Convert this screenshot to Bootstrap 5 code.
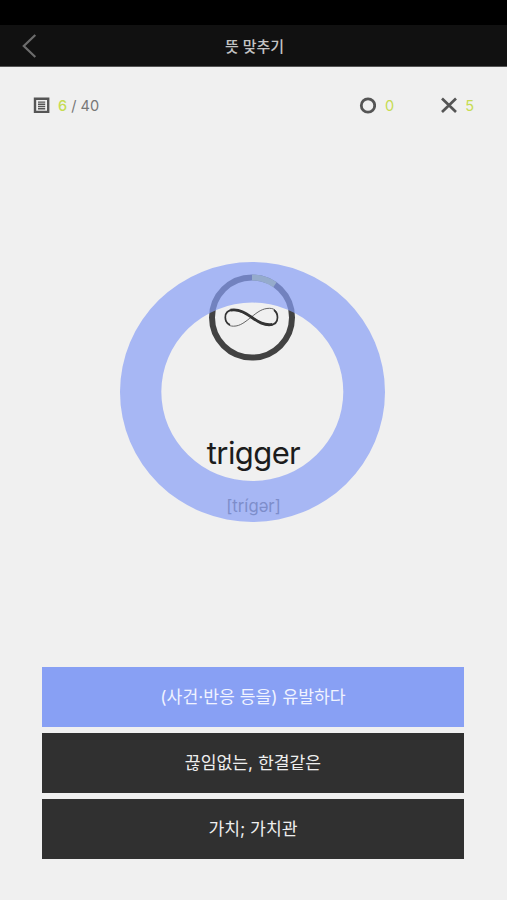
<!DOCTYPE html>
<html lang="ko">
<head>
<meta charset="utf-8">
<meta name="viewport" content="width=device-width, initial-scale=1">
<title>뜻 맞추기</title>
<link href="https://cdn.jsdelivr.net/npm/bootstrap@5.3.0/dist/css/bootstrap.min.css" rel="stylesheet">
<style>
  body { background: #f0f0f0; font-family: Inter, "Noto Sans CJK KR", sans-serif; color: #777; }
  svg { display: block; flex: none; }
  .status-strip { height: 25px; background: #000; }
  .title-bar { height: 42px; background: #111; border-bottom: 1px solid #555; display: grid; grid-template-columns: 60px 1fr 60px; }
  .title-bar h1 { font-size: 15px; font-weight: 500; color: #c4c4c4; line-height: 20px; padding: 2px 0 0 2px; }
  .back-btn { padding-left: 22px; }
  .score-bar { height: 24px; margin-top: 26px; padding: 0 33px; font-size: 14.5px; }
  .score-bar span { line-height: 20px; }
  .score-bar .score-text { padding-top: 1px; }
  .score-bar .lime { color: #c6dc52; }
  .gap-score { gap: 9px; }
  .gap-cross { gap: 8px; }
  .correct { margin-right: 47px; }
  .question { height: 260px; margin-top: 145px; padding-top: 12px; }
  .question .word { font-size: 31px; line-height: 40px; margin-top: 73px; color: #1c1c1c; letter-spacing: -.6px; }
  .question .phonetic { font-size: 16.7px; line-height: 24px; margin-top: 21px; color: #666; }
  .verdict { left: 119.5px; top: .3px; }
  .answers { width: 422px; margin: 145px 0 0 42px; gap: 6px; }
  .answers .btn { height: 60px; background: #303030; color: #eee; font-size: 17.2px; line-height: 24px; padding: 0; }
  .answers .btn.picked { background: #88a0f4; color: #f0f3ff; }
</style>
</head>
<body class="vh-100 overflow-hidden">
  <div class="status-strip"></div>
  <header class="title-bar align-items-center">
    <a class="back-btn" href="#" aria-label="뒤로">
      <svg width="15" height="24" viewBox="0 0 15 24" fill="none" stroke="#6c6c6c" stroke-width="2.2"><path d="M13.3 1 1.8 12 13.3 23"/></svg>
    </a>
    <h1 class="mb-0 text-center">뜻 맞추기</h1>
  </header>

  <div class="score-bar d-flex align-items-center">
    <div class="d-flex align-items-center gap-2 me-auto">
      <svg width="17" height="17" viewBox="0 0 17 17" fill="none" stroke="#555"><path stroke-width="2.4" d="M2 1.700h13.200v13.200H2z"/><path stroke-width="1.4" d="M5 5.100h7.200M5 7.300h7.200M5 9.500h7.200M5 11.700h7.200"/></svg>
      <span class="score-text"><span class="lime fw-medium">6</span> / 40</span>
    </div>
    <div class="correct d-flex align-items-center gap-score">
      <svg width="17" height="17" viewBox="0 0 17 17" fill="none" stroke="#555" stroke-width="2.800"><circle cx="9" cy="8.500" r="6.700"/></svg>
      <span class="score-text lime">0</span>
    </div>
    <div class="d-flex align-items-center gap-cross">
      <svg width="16" height="16" viewBox="0 0 16 16" fill="none" stroke="#555" stroke-width="2.700"><path d="m1 1.500 14 13.500M15 1.500 1 15"/></svg>
      <span class="score-text lime">5</span>
    </div>
  </div>

  <main class="question position-relative d-flex flex-column align-items-center">
    <svg width="88" height="86" viewBox="0.500 -0.500 88 86" fill="none" overflow="visible">
      <circle cx="42.500" cy="43" r="40" stroke="#424242" stroke-width="6"/>
      <path d="M42.500 3A40 40 0 0 1 65.400 10.200" stroke="#b5c86b" stroke-width="6"/>
      <path d="M16 43C16 49 19 51.700 24 51.700C31 51.700 36 47 42 42.500C48 37.500 53 33.800 60 33.800C65.500 33.800 68 37.500 68 42.500" stroke="#555" stroke-width=".9"/>
      <path d="M20.500 50.300C17.500 49 15.800 46.500 15.800 43C15.800 38 18.500 35.300 24 35.300C31.500 35.300 37 39 42.500 43C48 47 53.500 50.400 60 50.400C65.200 50.400 68 47.500 68 43C68 39.800 67 37.500 64.500 35.500" stroke="#333" stroke-width="1.700"/>
      <path d="M21 35.700C30 34.200 36.500 38.700 42.500 43C48.500 47.300 55 51.500 63 49.900" stroke="#333" stroke-width="2.800"/>
    </svg>
    <div class="word">trigger</div>
    <div class="phonetic">[trígər]</div>
    <svg class="verdict position-absolute" width="265" height="260" viewBox="0 0 265 260">
      <path fill="#889ef5" fill-opacity=".7" fill-rule="evenodd" d="M0 130a132.500 130 0 1 1 265 0a132.500 130 0 1 1-265 0ZM41.300 129.800a91 89.200 0 1 0 182 0a91 89.200 0 1 0-182 0Z"/>
    </svg>
  </main>

  <div class="answers d-grid">
    <button type="button" class="btn picked rounded-0 border-0">(사건·반응 등을) 유발하다</button>
    <button type="button" class="btn rounded-0 border-0">끊임없는, 한결같은</button>
    <button type="button" class="btn rounded-0 border-0">가치; 가치관</button>
  </div>
<script src="https://cdn.jsdelivr.net/npm/bootstrap@5.3.0/dist/js/bootstrap.bundle.min.js"></script>
</body>
</html>
